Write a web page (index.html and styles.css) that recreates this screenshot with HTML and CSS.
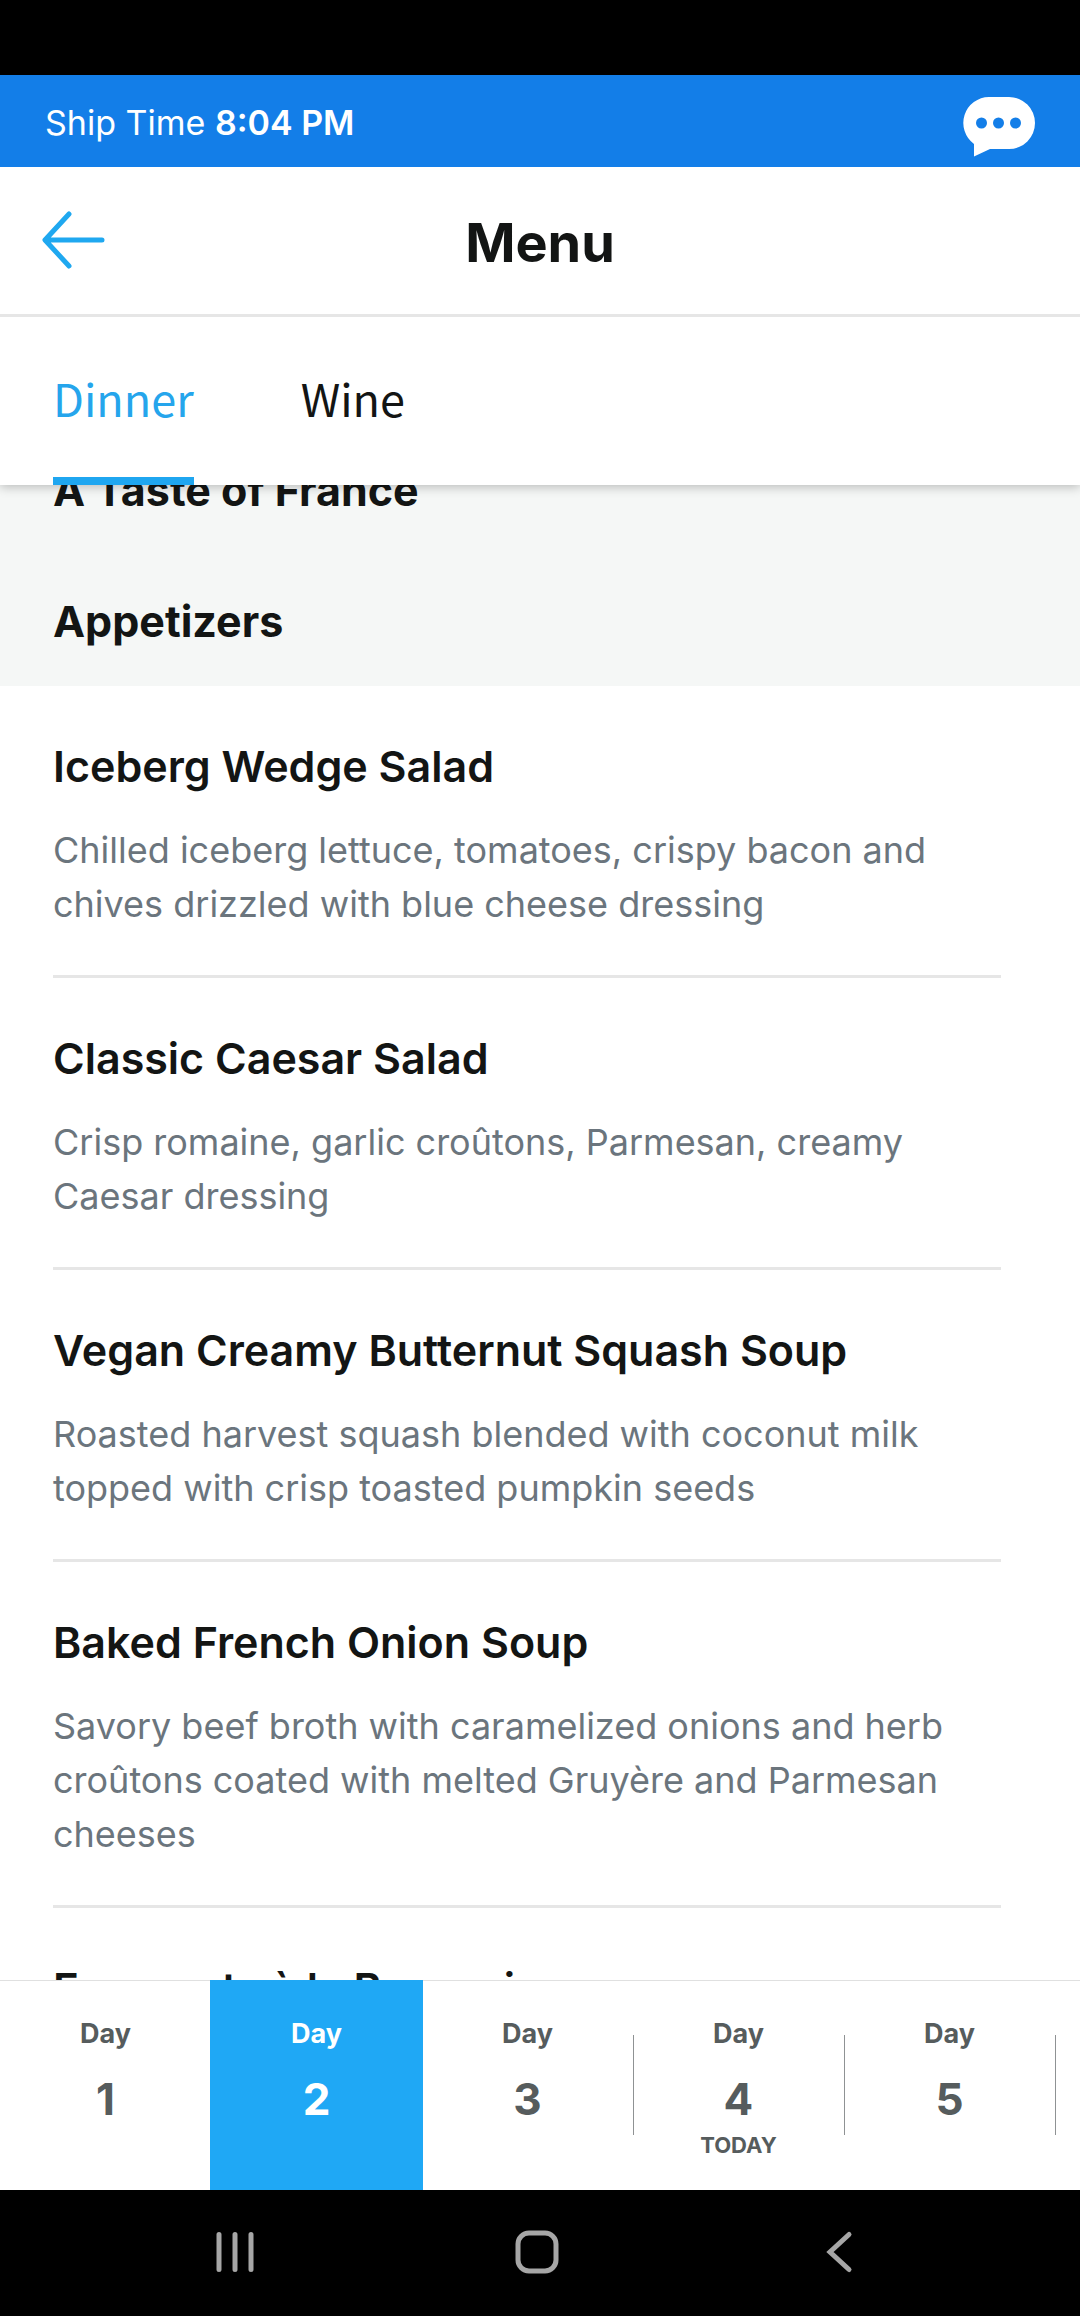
FILE: index.html
```html
<!DOCTYPE html>
<html lang="en">
<head>
<meta charset="utf-8">
<meta name="viewport" content="width=device-width, initial-scale=1">
<title>Menu</title>
<link rel="stylesheet" href="styles.css">
</head>
<body>
<div class="app">
  <div class="status-bar"></div>

  <div class="ship-bar">
    <p class="ship-time">Ship Time <strong>8:04 PM</strong></p>
    <button class="icon-button" type="button" aria-label="Chat">
      <svg width="72" height="60" viewBox="0 0 72 60">
        <path fill="#fff" d="M26 0h20a26 26 0 0 1 0 52H27L11 59.500V47A26 26 0 0 1 26 0z"/>
        <g fill="#137ee8"><circle cx="18.500" cy="26" r="5.500"/><circle cx="35.500" cy="26" r="5.500"/><circle cx="52.500" cy="26" r="5.500"/></g>
      </svg>
    </button>
  </div>

  <header class="title-bar">
    <button class="icon-button" type="button" aria-label="Back">
      <svg width="66" height="74" viewBox="0 -7 66 74" fill="none" stroke="#1fa8f0" stroke-width="5" stroke-linecap="round" stroke-linejoin="round">
        <path d="M28 4L4 30l24 26M5 30h56"/>
      </svg>
    </button>
    <h1 class="page-title">Menu</h1>
  </header>

  <nav class="tabs" aria-label="Menus">
    <a class="tab tab-active" href="#dinner" aria-current="page">Dinner</a>
    <a class="tab" href="#wine">Wine</a>
  </nav>

  <main class="menu" id="dinner">
    <div class="section-head">
      <h2 class="section-title">A Taste of France</h2>
      <h2 class="section-title">Appetizers</h2>
    </div>
    <ul class="dishes">
      <li class="dish">
        <h3 class="dish-name">Iceberg Wedge Salad</h3>
        <p class="dish-text">Chilled iceberg lettuce, tomatoes, crispy bacon and chives drizzled with blue cheese dressing</p>
      </li>
      <li class="dish">
        <h3 class="dish-name">Classic Caesar Salad</h3>
        <p class="dish-text">Crisp romaine, garlic croûtons, Parmesan, creamy Caesar dressing</p>
      </li>
      <li class="dish">
        <h3 class="dish-name">Vegan Creamy Butternut Squash Soup</h3>
        <p class="dish-text">Roasted harvest squash blended with coconut milk topped with crisp toasted pumpkin seeds</p>
      </li>
      <li class="dish">
        <h3 class="dish-name">Baked French Onion Soup</h3>
        <p class="dish-text">Savory beef broth with caramelized onions and herb croûtons coated with melted Gruyère and Parmesan cheeses</p>
      </li>
      <li class="dish">
        <h3 class="dish-name">Escargots à la Bourguignonne</h3>
      </li>
    </ul>
  </main>

  <div class="days">
    <button class="day" type="button"><span class="day-label">Day</span><span class="day-number">1</span></button>
    <button class="day day-selected" type="button" aria-pressed="true"><span class="day-label">Day</span><span class="day-number">2</span></button>
    <button class="day day-divided" type="button"><span class="day-label">Day</span><span class="day-number">3</span></button>
    <button class="day day-divided" type="button"><span class="day-label">Day</span><span class="day-number">4</span><span class="day-note">TODAY</span></button>
    <button class="day day-divided" type="button"><span class="day-label">Day</span><span class="day-number">5</span></button>
  </div>

  <div class="system-nav">
    <button class="icon-button" type="button" aria-label="Recent apps">
      <svg width="44" height="44" viewBox="0 0 44 44" fill="none" stroke="#a6a6a6" stroke-width="5" stroke-linecap="round">
        <path d="M6 4.500v35M22 4.500v35M38 4.500v35"/>
      </svg>
    </button>
    <button class="icon-button" type="button" aria-label="Home">
      <svg width="44" height="44" viewBox="0 0 44 44" fill="none" stroke="#a6a6a6" stroke-width="5">
        <rect x="3" y="3" width="38" height="38" rx="11"/>
      </svg>
    </button>
    <button class="icon-button" type="button" aria-label="System back">
      <svg width="44" height="44" viewBox="0 0 44 44" fill="none" stroke="#a6a6a6" stroke-width="5" stroke-linecap="round">
        <path d="M32 4.500L13 22l19 17.500"/>
      </svg>
    </button>
  </div>
</div>
</body>
</html>
```
FILE: styles.css
```css
* {
  box-sizing: border-box;
}

body,
h1,
h2,
h3,
p,
ul {
  margin: 0;
  padding: 0;
}

body {
  background: #fff;
  color: #131514;
  font-family: Inter, "Open Sans", sans-serif;
  font-size: 36px;
  line-height: 54px;
}

button {
  padding: 0;
  border: 0;
  background: none;
  font-family: inherit;
}

svg {
  display: block;
}

.app {
  display: flex;
  flex-direction: column;
  height: 100vh;
}

.status-bar {
  flex: none;
  height: 75px;
  background: #000;
}

.ship-bar {
  flex: none;
  display: flex;
  justify-content: space-between;
  align-items: flex-start;
  padding: 22px 45px 10px;
  background: #137ee8;
}

.ship-time {
  color: #fff;
  font-size: 34px;
  line-height: 52px;
}

.ship-time strong {
  font-weight: 600;
}

.title-bar {
  flex: none;
  display: grid;
  grid-template-columns: 1fr auto 1fr;
  align-items: start;
  padding: 36px 41px 31px;
  border-bottom: 3px solid #e6e6e6;
  background: #fff;
  z-index: 2;
}

.title-bar .icon-button {
  justify-self: start;
}

.page-title {
  font-size: 54px;
  line-height: 80px;
  font-weight: 700;
}

.tabs {
  flex: none;
  display: flex;
  gap: 107px;
  padding: 0 53px;
  background: #fff;
  box-shadow: 0 2px 10px rgba(0, 0, 0, 0.25);
  z-index: 1;
}

.tab {
  padding: 54px 0 52px;
  border-bottom: 8px solid transparent;
  color: #131514;
  font-family: "Noto Sans CJK JP", "Noto Sans", sans-serif;
  font-size: 45px;
  line-height: 54px;
  text-decoration: none;
}

.tab-active {
  border-color: #1fa6f0;
  color: #25a5ec;
}

.menu {
  flex: 1;
  min-height: 0;
  overflow: hidden;
}

/* The list is scrolled a little under the tabs. */
.section-head {
  display: flex;
  flex-direction: column;
  gap: 77px;
  margin-top: -22px;
  padding: 0 53px 38px;
  background: #f5f7f6;
}

.section-title {
  font-size: 43px;
  line-height: 54px;
  font-weight: 700;
}

.dishes {
  padding: 0 79px 0 53px;
  list-style: none;
}

.dish {
  padding: 53px 0 44px;
  border-bottom: 3px solid #e6e6e6;
}

.dish-name {
  font-size: 43px;
  line-height: 54px;
  font-weight: 600;
}

.dish-text {
  margin-top: 30px;
  color: #6b757d;
}

.days {
  flex: none;
  display: flex;
  height: 210px;
  border-top: 1px solid #e0e0e0;
}

.day {
  position: relative;
  flex: none;
  display: flex;
  flex-direction: column;
  align-items: center;
  width: 211px;
  padding-top: 35px;
  color: #565c5d;
  font-weight: 700;
}

.day-selected {
  margin-top: -1px;
  padding-top: 36px;
  background: #1fa8f5;
  box-shadow: -1px 0 #1fa8f5, 1px 0 #1fa8f5;
  color: #fff;
}

.day-divided::after {
  content: "";
  position: absolute;
  top: 54px;
  right: -1px;
  width: 1px;
  height: 100px;
  background: #8f9294;
}

.day-label {
  font-size: 27px;
  line-height: 36px;
}

.day-number {
  margin-top: 20px;
  font-size: 44px;
  line-height: 54px;
}

.day-note {
  margin-top: 5px;
  font-size: 22px;
  line-height: 28px;
}

.system-nav {
  flex: none;
  display: flex;
  justify-content: center;
  gap: 258px;
  height: 126px;
  padding: 40px 7px 42px 0;
  background: #000;
}
```
